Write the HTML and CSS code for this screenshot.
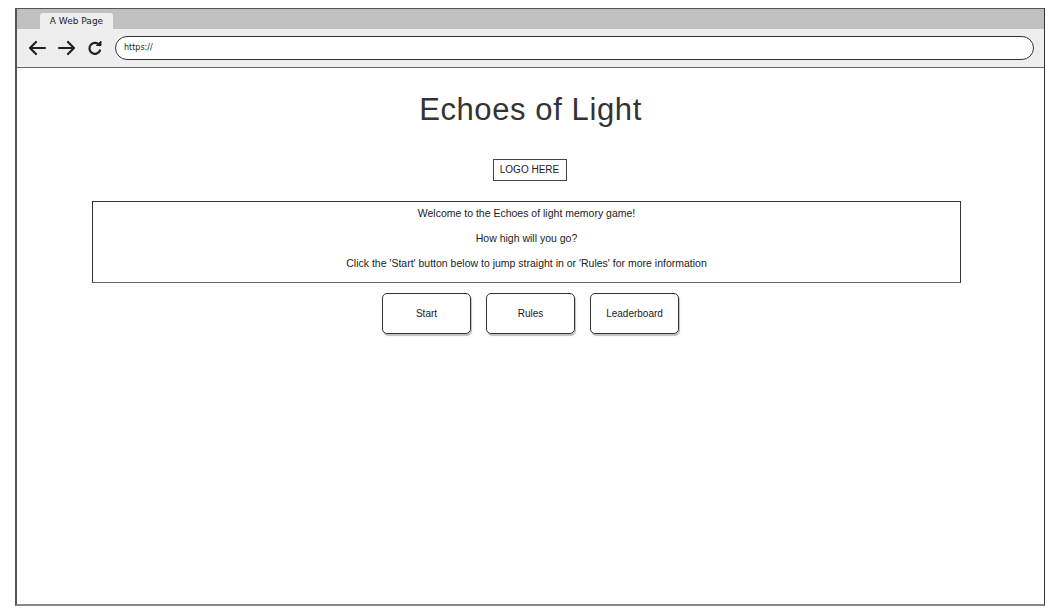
FILE: index.html
```html
<!DOCTYPE html>
<html>
<head>
<meta charset="utf-8">
<link rel="stylesheet" href="styles.css">
</head>
<body>
<div class="browser">
  <div class="tabstrip">
    <div class="tab">A Web Page</div>
  </div>
  <div class="toolbar">
    <svg class="nav" width="20" height="16" viewBox="0 0 20 16"><path d="M18 8H3M9 2L3 8l6 6" fill="none" stroke="#222" stroke-width="2.2" stroke-linecap="round" stroke-linejoin="round"/></svg>
    <svg class="nav" width="20" height="16" viewBox="0 0 20 16"><path d="M2 8h15M11 2l6 6-6 6" fill="none" stroke="#222" stroke-width="2.2" stroke-linecap="round" stroke-linejoin="round"/></svg>
    <svg class="nav reload" width="16" height="16" viewBox="0 0 16 16"><path d="M12.5 5.2A5.5 5.5 0 1 0 13 10.5" fill="none" stroke="#222" stroke-width="2.2" stroke-linecap="round"/><path d="M9.5 5.5h4.5V1z" fill="#222" stroke="#222" stroke-width="1" stroke-linejoin="round"/></svg>
    <div class="address">https://</div>
  </div>
  <div class="page">
    <h1 class="title">Echoes of Light</h1>
    <div class="logo">LOGO HERE</div>
    <div class="intro">
      <p>Welcome to the Echoes of light memory game!</p>
      <p>How high will you go?</p>
      <p>Click the 'Start' button below to jump straight in or 'Rules' for more information</p>
    </div>
    <div class="buttons">
      <div class="btn">Start</div>
      <div class="btn">Rules</div>
      <div class="btn">Leaderboard</div>
    </div>
  </div>
</div>
</body>
</html>
```

FILE: styles.css
```css
* { box-sizing: border-box; }
html, body { margin: 0; padding: 0; background: #fff; }
body {
  font-family: "Liberation Sans", Arial, sans-serif;
  color: #333;
  padding: 8px 0 0 15px;
}
.browser {
  width: 1030px;
  height: 598px;
  border: 1px solid #555;
  border-left-width: 2px;
  border-bottom-width: 2px;
  border-bottom-color: #888;
  border-right-color: #333;
  display: flex;
  flex-direction: column;
  background: #fff;
}
.tabstrip {
  height: 20px;
  background: #c0c0c0;
  padding: 4px 0 0 23px;
  display: flex;
}
.tab {
  width: 73px;
  height: 16px;
  background: #eeeeee;
  border-radius: 3px 3px 0 0;
  line-height: 16px;
  text-align: center;
  color: #222;
  font-family: "DejaVu Sans", sans-serif;
  font-size: 9px;
}
.toolbar {
  height: 39px;
  background: #eeeeee;
  border-bottom: 1px solid #666;
  display: flex;
  align-items: center;
  padding: 0 10px 0 10px;
}
.nav { flex: none; }
.toolbar .nav + .nav { margin-left: 10px; }
.toolbar .reload { margin-left: 12px; }
.address {
  margin-left: 12px;
  flex: 1;
  height: 24px;
  border: 1px solid #333;
  border-radius: 12px;
  background: #fff;
  font-family: "DejaVu Sans", sans-serif;
  font-size: 8px;
  line-height: 22px;
  padding-left: 8px;
  color: #222;
}
.page {
  flex: 1;
  display: flex;
  flex-direction: column;
  align-items: center;
  padding-top: 24px;
}
.title {
  margin: 0;
  font-weight: normal;
  font-size: 31px;
  letter-spacing: 0.6px;
  line-height: 36px;
  color: #333;
}
.logo {
  margin-top: 31px;
  width: 74px;
  height: 22px;
  border: 1px solid #444;
  font-size: 10px;
  line-height: 20px;
  text-align: center;
  color: #222;
  margin-right: 2px;
}
.intro {
  margin-top: 20px;
  width: 869px;
  height: 82px;
  border: 1px solid #333;
  border-bottom-color: #666;
  margin-right: 8px;
  text-align: center;
  font-size: 10.5px;
  color: #222;
  padding-top: 4px;
}
.intro p {
  margin: 0;
  height: 25px;
  line-height: 14px;
}
.buttons {
  margin-top: 10px;
  display: flex;
  gap: 15px;
}
.btn {
  width: 89px;
  height: 41px;
  border: 1px solid #333;
  border-radius: 5px;
  box-shadow: 1px 2px 1px rgba(0,0,0,0.25);
  font-size: 10px;
  line-height: 39px;
  text-align: center;
  color: #222;
}
```
